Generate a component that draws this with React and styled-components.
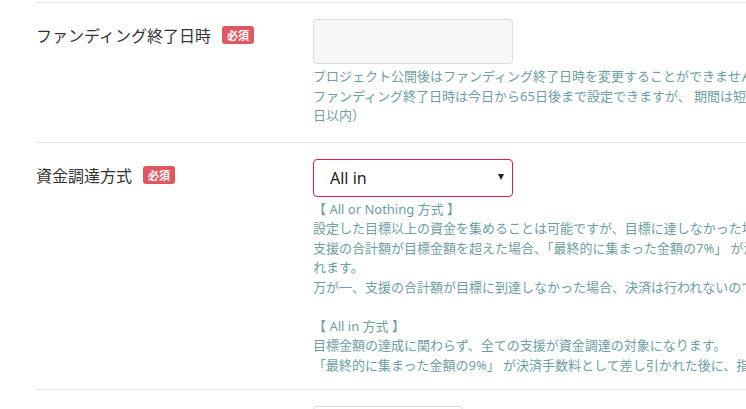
import React from "react";
import styled, { createGlobalStyle } from "styled-components";

const Global = createGlobalStyle`
  html, body { margin: 0; padding: 0; background: #fff; overflow: hidden; }
  body { font-family: "Noto Sans", "Noto Sans CJK JP", sans-serif; color: #333; }
`;

const Page = styled.div`
  width: 1100px;
  padding-left: 36px;
  padding-top: 2px;
`;

const Row = styled.div`
  display: flex;
  border-top: 1px solid #e4e4e4;
  padding: 16px 0 ${(p) => p.$pb || 14}px;
`;

const LabelCol = styled.div`
  width: 277px;
  flex: none;
  display: flex;
  align-items: center;
  gap: 11px;
  height: ${(p) => p.$h || 32}px;
  box-sizing: border-box;
`;

const Label = styled.span`
  font-size: 16px;
  color: #333;
  font-family: "Noto Sans CJK JP", sans-serif;
`;

const Badge = styled.span`
  display: inline-flex;
  align-items: center;
  justify-content: center;
  width: 32px;
  height: 18px;
  border-radius: 3px;
  background: #e0575f;
  color: #fff;
  font-size: 11px;
  font-weight: 700;
  font-family: "Noto Sans CJK JP", sans-serif;
`;

const FieldCol = styled.div`
  flex: 1;
  display: flex;
  flex-direction: column;
  align-items: flex-start;
`;

const TextBox = styled.div`
  width: 200px;
  height: 45px;
  box-sizing: border-box;
  background: #f7f7f7;
  border: 1px solid #dcdcdc;
  border-radius: 4px;
`;

const SmallBox = styled.div`
  width: 150px;
  height: 30px;
  box-sizing: border-box;
  background: #fff;
  border: 1px solid #dcdcdc;
  border-radius: 4px;
`;

const Select = styled.div`
  width: 200px;
  height: 38px;
  box-sizing: border-box;
  border: 1px solid #e5195f;
  border-radius: 4px;
  display: flex;
  align-items: center;
  justify-content: space-between;
  padding: 0 8px 0 16px;
  font-size: 16px;
  color: #222;
`;

const Arrow = styled.span`
  width: 0;
  height: 0;
  border-left: 3.5px solid transparent;
  border-right: 3.5px solid transparent;
  border-top: 6px solid #222;
  margin-top: -1px;
`;

const Help = styled.div`
  margin-top: ${(p) => p.$mt || 3}px;
  font-size: 13px;
  line-height: 19.5px;
  color: #6d9ea2;
  white-space: nowrap;
`;

const Line = styled.div`
  min-height: 19.5px;
`;

export default function App() {
  return (
    <>
      <Global />
      <Page>
        <Row $pb={16}>
          <LabelCol $h={32}>
            <Label>ファンディング終了日時</Label>
            <Badge>必須</Badge>
          </LabelCol>
          <FieldCol>
            <TextBox />
            <Help $mt={3}>
              <Line>プロジェクト公開後はファンディング終了日時を変更することができません。</Line>
              <Line>ファンディング終了日時は今日から65日後まで設定できますが、 期間は短い方が成功率が高い傾向にあります（推奨：30〜40</Line>
              <Line>日以内）</Line>
            </Help>
          </FieldCol>
        </Row>
        <Row $pb={14}>
          <LabelCol $h={32}>
            <Label>資金調達方式</Label>
            <Badge>必須</Badge>
          </LabelCol>
          <FieldCol>
            <Select>
              <span>All in</span>
              <Arrow />
            </Select>
            <Help $mt={3}>
              <Line>【 All or Nothing 方式 】</Line>
              <Line>設定した目標以上の資金を集めることは可能ですが、目標に達しなかった場合は支援者への返金となります。</Line>
              <Line>支援の合計額が目標金額を超えた場合、「最終的に集まった金額の7%」 が決済手数料として差し引かれた後に、指定口座に振り込ま</Line>
              <Line>れます。</Line>
              <Line>万が一、支援の合計額が目標に到達しなかった場合、決済は行われないので、手数料は一切かかりません。</Line>
              <Line />
              <Line>【 All in 方式 】</Line>
              <Line>目標金額の達成に関わらず、全ての支援が資金調達の対象になります。</Line>
              <Line>「最終的に集まった金額の9%」 が決済手数料として差し引かれた後に、指定口座に振り込まれます。</Line>
            </Help>
          </FieldCol>
        </Row>
        <Row $pb={16}>
          <LabelCol $h={32} />
          <FieldCol>
            <SmallBox />
          </FieldCol>
        </Row>
      </Page>
    </>
  );
}
